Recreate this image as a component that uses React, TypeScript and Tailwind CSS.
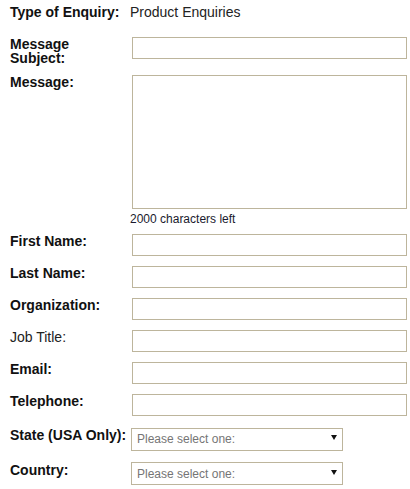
import React from 'react';

const inputCls = 'h-[22px] w-[275px] border border-[#bdb59c] bg-white outline-none';
const labelCls = 'w-[122px] shrink-0 pr-[6px] text-[14px] leading-[14px] font-bold text-[#111]';

function TextRow({ label, bold = true }: { label: string; bold?: boolean }) {
    return (
        <div className="flex items-start mb-[10px]">
            <label className={bold ? labelCls : 'w-[122px] shrink-0 pr-[6px] text-[14px] leading-[14px] text-[#222]'}>
                {label}
            </label>
            <input type="text" className={inputCls} />
        </div>
    );
}

function SelectRow({ label }: { label: string }) {
    return (
        <div className="flex items-start mb-[10px]">
            <label className="w-[121px] shrink-0 whitespace-nowrap text-[14px] leading-[14px] font-bold text-[#111] pt-[2px]">
                {label}
            </label>
            <div className="relative w-[212px]">
                <select className="h-[23px] w-full appearance-none border border-[#bdb59c] bg-white pl-[5px] text-[12px] text-[#757575] outline-none">
                    <option>Please select one:</option>
                </select>
                <svg
                    className="pointer-events-none absolute right-[6px] top-[9px]"
                    width="6"
                    height="5"
                    viewBox="0 0 6 5"
                >
                    <path d="M0 0 H6 L3 5 Z" fill="#111" />
                </svg>
            </div>
        </div>
    );
}

export default function App() {
    return (
        <div
            className="w-[410px] h-[489px] bg-white pl-[10px] pt-[5px]"
            style={{ fontFamily: '"Liberation Sans", Arial, sans-serif' }}
        >
            <div className="flex items-start mb-[18px] text-[14px] leading-[14px]">
                <span className="w-[120px] shrink-0 font-bold text-[#111]">Type of Enquiry:</span>
                <span className="text-[#222]">Product Enquiries</span>
            </div>

            <div className="flex items-start mb-[10px]">
                <label className={labelCls}>Message Subject:</label>
                <input type="text" className={inputCls} />
            </div>

            <div className="flex items-start">
                <label className={labelCls}>Message:</label>
                <textarea className="h-[134px] w-[275px] resize-none border border-[#bdb59c] bg-white outline-none" />
            </div>
            <div className="pl-[120px] mt-[3px] mb-[8px] text-[12px] leading-[14px] text-[#1a1a2e]">
                2000 characters left
            </div>

            <TextRow label="First Name:" />
            <TextRow label="Last Name:" />
            <TextRow label="Organization:" />
            <TextRow label="Job Title:" bold={false} />
            <TextRow label="Email:" />
            <TextRow label="Telephone:" />

            <SelectRow label="State (USA Only):" />
            <SelectRow label="Country:" />
        </div>
    );
}
